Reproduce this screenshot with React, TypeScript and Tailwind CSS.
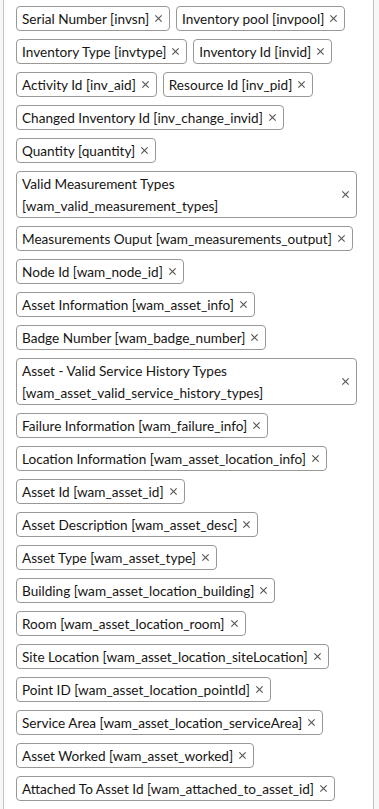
const fields = [
  'Serial Number [invsn]',
  'Inventory pool [invpool]',
  'Inventory Type [invtype]',
  'Inventory Id [invid]',
  'Activity Id [inv_aid]',
  'Resource Id [inv_pid]',
  'Changed Inventory Id [inv_change_invid]',
  'Quantity [quantity]',
  'Valid Measurement Types [wam_valid_measurement_types]',
  'Measurements Ouput [wam_measurements_output]',
  'Node Id [wam_node_id]',
  'Asset Information [wam_asset_info]',
  'Badge Number [wam_badge_number]',
  'Asset - Valid Service History Types [wam_asset_valid_service_history_types]',
  'Failure Information [wam_failure_info]',
  'Location Information [wam_asset_location_info]',
  'Asset Id [wam_asset_id]',
  'Asset Description [wam_asset_desc]',
  'Asset Type [wam_asset_type]',
  'Building [wam_asset_location_building]',
  'Room [wam_asset_location_room]',
  'Site Location [wam_asset_location_siteLocation]',
  'Point ID [wam_asset_location_pointId]',
  'Service Area [wam_asset_location_serviceArea]',
  'Asset Worked [wam_asset_worked]',
  'Attached To Asset Id [wam_attached_to_asset_id]',
  'Attached To Asset Type [wam_attached_to_asset_type]',
]

function Chip({ label }: { label: string }) {
  return (
    <div className="flex max-w-full items-center rounded-[4px] border border-[#9a9894] bg-white py-[0.5px] pl-[5px] pr-[6px]">
      <span className="min-w-0 flex-1 leading-[22px]">{label}</span>
      <button className="ml-[5px] flex h-[22px] shrink-0 items-center text-[#5b5955]">
        <svg width="9" height="9" viewBox="0 0 10 10" fill="none" stroke="currentColor" strokeWidth="1.3">
          <path d="M1.5 1.5l7 7M8.5 1.5l-7 7" />
        </svg>
      </button>
    </div>
  )
}

export default function App() {
  return (
    <div className="h-[809px] overflow-hidden bg-[#f7f7f7] pl-[3px] pr-[5px] font-['Lato',sans-serif] text-[13.6px] text-[#161513]">
      <div className="h-full border-x border-[#c4c2be] bg-white pl-3 pr-4 pt-[6px]">
        <div className="flex flex-wrap gap-x-[6px] gap-y-2">
          {fields.map((f) => (
            <Chip key={f} label={f} />
          ))}
        </div>
      </div>
    </div>
  )
}
